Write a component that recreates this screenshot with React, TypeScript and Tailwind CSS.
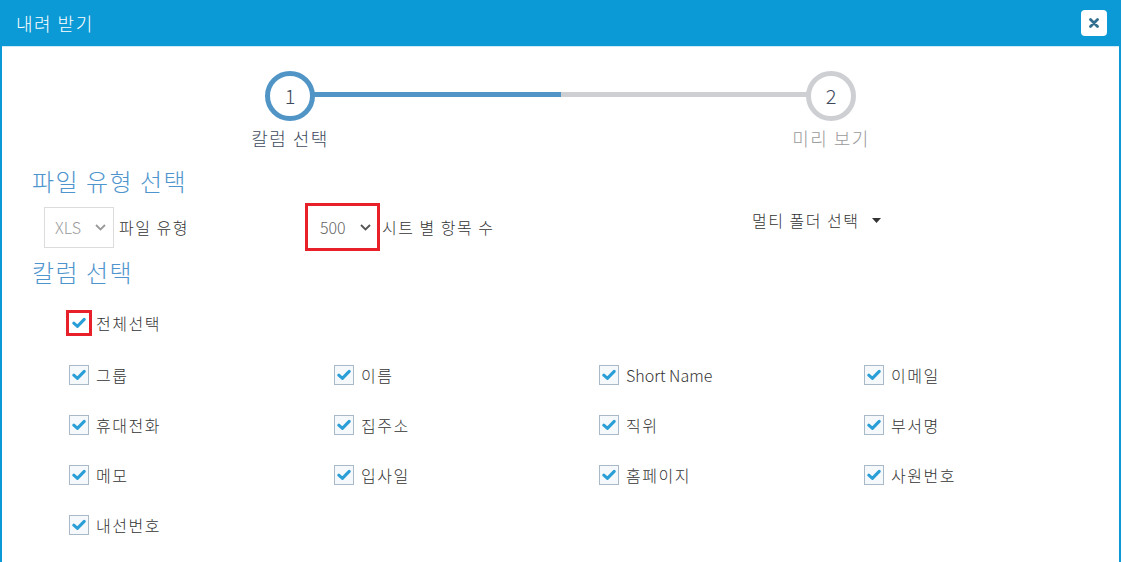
import React from "react";

const font = { fontFamily: '"Noto Sans CJK KR", "Open Sans", sans-serif' };

function Check({ red = false }: { red?: boolean }) {
  return (
    <span
      className={
        red
          ? "flex h-[26px] w-[26px] shrink-0 items-center justify-center border-[3px] border-[#e8202a] bg-white"
          : "flex h-[20px] w-[20px] shrink-0 items-center justify-center border border-[#a9b9c8] bg-[#f6f9fc]"
      }
    >
      <svg width="14" height="12" viewBox="0 0 14 12">
        <path d="M1.8 6.2 L5.4 9.4 L12.2 2.4" fill="none" stroke="#2a9ed6" strokeWidth="3" strokeLinecap="round" strokeLinejoin="round" />
      </svg>
    </span>
  );
}

function Chevron({ color }: { color: string }) {
  return (
    <svg width="11" height="7" viewBox="0 0 11 7">
      <path d="M1 1 L5.5 5.5 L10 1" fill="none" stroke={color} strokeWidth="1.8" />
    </svg>
  );
}

const items = [
  "그룹", "이름", "Short Name", "이메일",
  "휴대전화", "집주소", "직위", "부서명",
  "메모", "입사일", "홈페이지", "사원번호",
  "내선번호",
];

export default function App() {
  return (
    <div className="h-[562px] w-[1123px] overflow-hidden bg-white font-light" style={font}>
      <div className="h-[562px] w-[1121px] border-x-2 border-[#0b9ad5] bg-white">
        <div className="flex h-[47px] items-center justify-between border-b border-[#cfe9f6] bg-[#0b9ad5] pl-[14px] pr-[12px]">
          <span className="text-[18px] leading-none tracking-[1.5px] text-white">내려 받기</span>
          <button className="flex h-[26px] w-[26px] items-center justify-center rounded-[4px] bg-white">
            <svg width="10" height="10" viewBox="0 0 10 10">
              <path d="M1.5 1.5 L8.5 8.5 M8.5 1.5 L1.5 8.5" stroke="#33708f" strokeWidth="2.8" strokeLinecap="round" />
            </svg>
          </button>
        </div>

        <div className="relative mx-auto mt-[24px] w-[661px]">
          <div className="absolute left-[75px] right-[75px] top-[21px] flex h-[5px]">
            <div className="h-full flex-1 bg-[#5095c6]" />
            <div className="h-full flex-1 bg-[#cdcfd3]" />
          </div>
          <div className="relative flex justify-between">
            <div className="flex w-[120px] flex-col items-center">
              <div className="flex h-[50px] w-[50px] items-center justify-center rounded-full border-[5px] border-[#5095c6] bg-white text-[20px] text-[#3d4a5c]">1</div>
              <div className="mt-[5px] text-[18px] leading-[24px] tracking-[1.5px] text-[#3d4a5c]">칼럼 선택</div>
            </div>
            <div className="flex w-[120px] flex-col items-center">
              <div className="flex h-[50px] w-[50px] items-center justify-center rounded-full border-[5px] border-[#cdcfd3] bg-white text-[20px] text-[#3d4a5c]">2</div>
              <div className="mt-[5px] text-[18px] leading-[24px] tracking-[1.5px] text-[#9a9a9a]">미리 보기</div>
            </div>
          </div>
        </div>

        <div className="pl-[30px]">
          <div className="mt-[15px] text-[24px] leading-[32px] tracking-[1.5px] text-[#4f95cd]">파일 유형 선택</div>

          <div className="mt-[6px] flex h-[48px] items-center pl-[12px]">
            <div className="flex w-[261px] items-center">
              <div className="flex h-[41px] w-[70px] items-center justify-between border border-[#dcdcdc] pl-[10px] pr-[7px]">
                <span className="text-[16px] text-[#9a9a9a]">XLS</span>
                <Chevron color="#9a9a9a" />
              </div>
              <span className="ml-[5px] text-[16px] tracking-[1.5px] text-[#333]">파일 유형</span>
            </div>

            <div className="flex w-[447px] items-center">
              <div className="flex h-[48px] w-[75px] items-center justify-between border-[3px] border-[#e8202a] pl-[12px] pr-[6px]">
                <span className="text-[16px] text-[#666]">500</span>
                <Chevron color="#555" />
              </div>
              <span className="ml-[2px] text-[16px] tracking-[1.5px] text-[#333]">시트 별 항목 수</span>
            </div>

            <div className="-mt-[14px] flex items-center gap-[13px]">
              <span className="text-[16px] tracking-[1.5px] text-[#333]">멀티 폴더 선택</span>
              <svg width="9" height="5" viewBox="0 0 9 5">
                <path d="M0 0 L9 0 L4.5 5 Z" fill="#333" />
              </svg>
            </div>
          </div>

          <div className="mt-[5px] text-[24px] leading-[32px] tracking-[1.5px] text-[#4f95cd]">칼럼 선택</div>

          <div className="ml-[34px] mt-[22px] flex h-[26px] items-center gap-[4px]">
            <Check red />
            <span className="text-[16px] tracking-[1.5px] text-[#333]">전체선택</span>
          </div>

          <div className="ml-[37px] mt-[29px] grid grid-cols-[265px_265px_265px_265px] gap-y-[30px]">
            {items.map((t) => (
              <div key={t} className="flex h-[20px] items-center gap-[7px]">
                <Check />
                <span className={t === "Short Name" ? "text-[16px] text-[#333]" : "text-[16px] tracking-[1.5px] text-[#333]"}>{t}</span>
              </div>
            ))}
          </div>
        </div>
      </div>
    </div>
  );
}
